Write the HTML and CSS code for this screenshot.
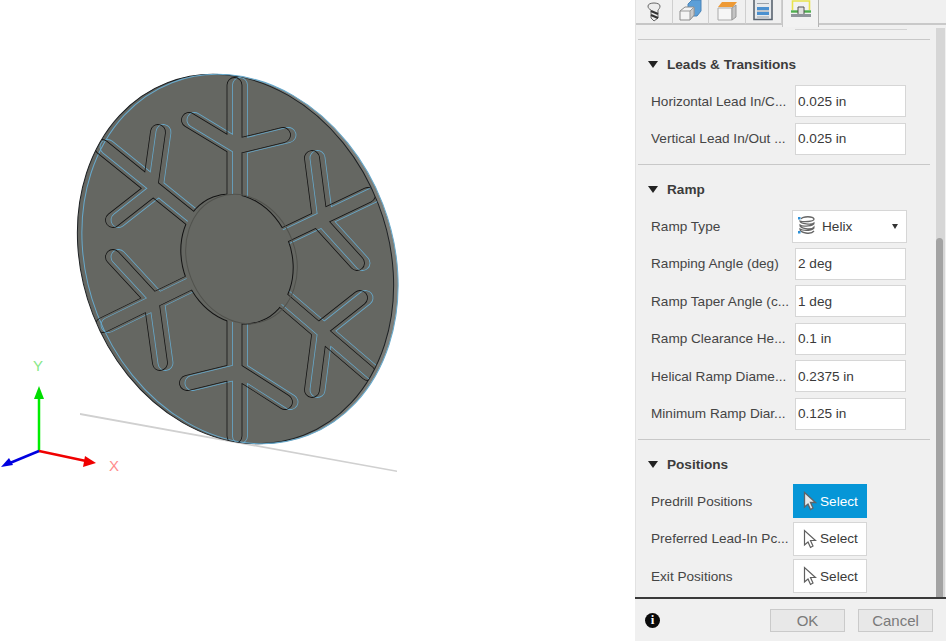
FILE: index.html
```html
<!DOCTYPE html>
<html lang="en">
<head>
<meta charset="utf-8">
<title>Toolpath settings</title>
<link rel="stylesheet" href="styles.css">
</head>
<body>
<main class="viewport">
  <svg class="scene" width="636" height="641" viewBox="0 0 636 641" xmlns="http://www.w3.org/2000/svg">
    <defs>
      <g id="flake" fill="none" stroke-linecap="round">
        <path d="M234.500 200V85M189 120L232 146M283 135L238 146"/>
        <path d="M102 147L195 222M158 132L151 182M113 220L150 191"/>
        <path d="M368 195L278 238M312 158L319 212M357 263L318 220"/>
        <path d="M234.500 320V436M187 383L232 372M285 402L238 372"/>
        <path d="M103 325L195 280M113 257L150 297M160 363L152 305"/>
        <path d="M368 373L278 296M360 298L322 328M312 390L319 336"/>
      </g>
      <mask id="flake-edge" maskUnits="userSpaceOnUse" x="0" y="0" width="636" height="641">
        <use href="#flake" stroke="#fff" stroke-width="15.800"/>
        <use href="#flake" stroke="#000" stroke-width="14.200"/>
      </mask>
      <mask id="union-edge" maskUnits="userSpaceOnUse" x="0" y="0" width="636" height="641">
        <use href="#flake" stroke="#fff" stroke-width="15.800"/>
        <ellipse fill="#fff" rx="67" ry="55" transform="translate(237 259) rotate(68.900)"/>
        <use href="#flake" stroke="#000" stroke-width="14.200"/>
        <ellipse fill="#000" rx="66" ry="54" transform="translate(237 259) rotate(68.900)"/>
      </mask>
      <clipPath id="face"><ellipse rx="189" ry="153" transform="translate(235.500 259) rotate(68.900)"/></clipPath>
    </defs>
    <path class="ground" d="M80 413L397 470.500V472L80 415Z"/>
    <ellipse class="rim" rx="189" ry="153" transform="translate(240 259) rotate(68.900)"/>
    <ellipse class="body" rx="189" ry="153" transform="translate(235.500 259) rotate(68.900)"/>
    <ellipse class="inner-blue" rx="189" ry="153" transform="translate(240 259) rotate(68.900)"/>
    <g clip-path="url(#face)">
      <g transform="translate(5.500 0)"><rect class="edge-blue" width="636" height="641" mask="url(#flake-edge)"/></g>
      <ellipse class="hub" rx="66" ry="54" transform="translate(237 259) rotate(68.900)"/>
      <rect class="edge-dark" width="636" height="641" mask="url(#union-edge)"/>
    </g>
    <ellipse class="hub-ring" rx="66" ry="54" transform="translate(241.500 259) rotate(68.900)"/>
    <path class="axis-y" d="M39 451V394"/><path class="head-y" d="M39 386L44 399H34Z"/>
    <path class="axis-x" d="M39 451L86 461"/><path class="head-x" d="M96 463L83 467L85 456Z"/>
    <path class="axis-z" d="M39 451L10 463"/><path class="head-z" d="M1 467L9 458L13 465Z"/>
    <text class="label-y" x="38" y="371">Y</text>
    <text class="label-x" x="114" y="471">X</text>
  </svg>
</main>

<aside class="panel">
  <nav class="tabs">
    <div class="tab">
      <svg width="16" height="22" viewBox="0 0 16 22"><path d="M2 6C2 2 14 2 14 6C14 8 13 9 12 10V18L8 21L5 18V10C3 9 2 8 2 6Z" fill="#ececec" stroke="#666"/><path d="M5 11L12 14M5 15L12 18" stroke="#333" stroke-width="2.200"/></svg>
    </div>
    <div class="tab">
      <svg width="24" height="22" viewBox="0 0 24 22"><path d="M10 4L14 0H23V11L19 16H10Z" fill="#5c9fd8" stroke="#4a84b8"/><path d="M2 11L7 7H16V15L12 20H2Z" fill="#f4f4f4" stroke="#8c8c8c"/><path d="M12 11V20L16 15V7Z" fill="#c9c9c9" stroke="#999"/><path d="M2 11H12" stroke="#999"/></svg>
    </div>
    <div class="tab">
      <svg width="22" height="22" viewBox="0 0 22 22"><path d="M2 7L6 2H21L17 7Z" fill="#ee9a35"/><path d="M2 8H16V20H2Z" fill="#f6f6f6" stroke="#aaa"/><path d="M16 8L20 5V17L16 20Z" fill="#c4c4c4" stroke="#999"/></svg>
    </div>
    <div class="tab">
      <svg width="20" height="22" viewBox="0 0 20 22"><path d="M1 -1V19.500H19V-1" fill="#e6e9ec" stroke="#5a6470" stroke-width="1.600"/><path d="M4 7H16V10H4ZM4 12H16V15H4Z" fill="#4a90d0"/><path d="M4 3.500H16M4 11H16M4 17H16" stroke="#9aa2aa"/></svg>
    </div>
    <div class="tab tab-active">
      <svg width="22" height="22" viewBox="0 0 22 22"><path d="M2.500 10V1H19.500V10" fill="#f2f2f2" stroke="#e9e34c" stroke-width="1.600"/><path d="M1 11.500H21" stroke="#4fae4f" stroke-width="2.400"/><path d="M1 15.500H21" stroke="#8f959b" stroke-width="3"/><path d="M8 14V7H14V14" fill="#e0e0e0" stroke="#555"/></svg>
    </div>
    <div class="tabs-rest"></div>
  </nav>

  <div class="scroll">
    <div class="content">
      <div class="cut-off"></div>

      <section class="group">
        <h2 class="group-title"><span class="caret"></span>Leads &amp; Transitions</h2>
        <div class="row"><span class="label">Horizontal Lead In/C...</span><span class="input">0.025 in</span></div>
        <div class="row"><span class="label">Vertical Lead In/Out ...</span><span class="input">0.025 in</span></div>
      </section>

      <section class="group">
        <h2 class="group-title"><span class="caret"></span>Ramp</h2>
        <div class="row">
          <span class="label">Ramp Type</span>
          <span class="dropdown">
            <svg class="helix" width="20" height="22" viewBox="0 0 20 22"><path d="M4 4C6 1 16 1 17 4C17 7 6 7 3 6C3 9 15 10 17 8C18 11 5 12 3 10C2 14 15 15 17 12C18 16 6 16 3 14C3 18 14 20 17 16" fill="none" stroke="#666" stroke-width="1.300"/><rect x="1" y="2" width="2.500" height="2.500" fill="#2b8fd6"/><rect x="1" y="16" width="2.500" height="2.500" fill="#2b8fd6"/></svg>
            <span class="dropdown-text">Helix</span>
            <span class="dropdown-caret"></span>
          </span>
        </div>
        <div class="row"><span class="label">Ramping Angle (deg)</span><span class="input">2 deg</span></div>
        <div class="row"><span class="label">Ramp Taper Angle (c...</span><span class="input">1 deg</span></div>
        <div class="row"><span class="label">Ramp Clearance He...</span><span class="input">0.1 in</span></div>
        <div class="row"><span class="label">Helical Ramp Diame...</span><span class="input">0.2375 in</span></div>
        <div class="row"><span class="label">Minimum Ramp Diar...</span><span class="input">0.125 in</span></div>
      </section>

      <section class="group">
        <h2 class="group-title"><span class="caret"></span>Positions</h2>
        <div class="row">
          <span class="label">Predrill Positions</span>
          <span class="select select-active"><svg width="14" height="20" viewBox="0 0 14 20"><path d="M1.500 1.500V16L5 13L7.500 18.500L10 17L7.500 11.500H12.500Z" fill="#e6e9eb" stroke="#5f6468" stroke-width="1.300"/></svg>Select</span>
        </div>
        <div class="row">
          <span class="label">Preferred Lead-In Pc...</span>
          <span class="select"><svg width="14" height="20" viewBox="0 0 14 20"><path d="M1.500 1.500V16L5 13L7.500 18.500L10 17L7.500 11.500H12.500Z" fill="#fff" stroke="#5f5f5f" stroke-width="1.200"/></svg>Select</span>
        </div>
        <div class="row">
          <span class="label">Exit Positions</span>
          <span class="select"><svg width="14" height="20" viewBox="0 0 14 20"><path d="M1.500 1.500V16L5 13L7.500 18.500L10 17L7.500 11.500H12.500Z" fill="#fff" stroke="#5f5f5f" stroke-width="1.200"/></svg>Select</span>
        </div>
      </section>
    </div>
    <div class="scrollbar"><div class="thumb"></div></div>
  </div>

  <footer class="footer">
    <span class="info">i</span>
    <span class="btn">OK</span>
    <span class="btn">Cancel</span>
  </footer>
</aside>
</body>
</html>
```

FILE: styles.css
```css
* { box-sizing: border-box; }

html, body { margin: 0; height: 100%; }

body {
  display: flex;
  width: 946px;
  height: 641px;
  overflow: hidden;
  background: #fff;
  font-family: "Liberation Sans", Arial, sans-serif;
  font-size: 13.6px;
  color: #454545;
}

.viewport { width: 635px; flex: none; position: relative; background: #fff; }
.scene { position: absolute; left: 0; top: 0; }

.ground { fill: #d0d0d0; }
.rim { fill: #7c7d78; }
.body { fill: #656762; stroke: #1d2124; stroke-width: 1; }
.inner-blue { fill: none; stroke: #67a9cc; stroke-width: 1; }
.edge-blue { fill: #66a8ca; }
.edge-dark { fill: #131313; }
.hub { fill: #656762; }
.hub-ring { fill: none; stroke: #51524d; stroke-width: 1; }

.axis-y { stroke: #00ee00; stroke-width: 2.5; }
.head-y { fill: #00dd00; }
.axis-x { stroke: #f00000; stroke-width: 2.5; }
.head-x { fill: #f00000; }
.axis-z { stroke: #0000e0; stroke-width: 2.5; }
.head-z { fill: #0000e0; }
.label-y, .label-x { font-size: 15px; }
.label-y { fill: #86e886; text-anchor: middle; }
.label-x { fill: #ff8c8c; text-anchor: middle; }

.panel {
  width: 311px;
  flex: none;
  display: flex;
  flex-direction: column;
  background: #f0f0f0;
  border-left: 1px solid #e2e2e2;
}

.tabs { display: flex; height: 25px; flex: none; }
.tab {
  width: 36.500px;
  height: 25px;
  display: flex;
  justify-content: center;
  align-items: flex-start;
  border-right: 1px solid #cfcfcf;
  border-bottom: 2px solid #c6c6c6;
  overflow: hidden;
}
.tab-active {
  width: 37px;
  height: 27px;
  border-left: 1px solid #c6c6c6;
  border-right: 1px solid #b5b5b5;
  border-bottom: 0;
  background: #f2f2f2;
  position: relative;
}
.tabs-rest { flex: 1; border-bottom: 2px solid #c9c9c9; }

.scroll { flex: 1; display: flex; min-height: 0; }
.content { width: 300px; flex: none; padding-left: 2px; }

.cut-off {
  width: 112px;
  height: 5px;
  margin-left: 157px;
  background: #f0f0f0;
  border-bottom: 1px solid #d4d4d4;
  margin-bottom: 9px;
}

.group {
  width: 292px;
  border-top: 1px solid #c8c8c8;
  padding-top: 14px;
  padding-bottom: 6.75px;
}

.group-title {
  display: flex;
  align-items: center;
  height: 20px;
  margin: 0 0 8.25px 0;
  padding-left: 10px;
  font-size: 13.6px;
  font-weight: 700;
  color: #3c3c3c;
}

.caret {
  width: 0;
  height: 0;
  margin-right: 9px;
  border-left: 5px solid transparent;
  border-right: 5px solid transparent;
  border-top: 7px solid #222;
}

.row {
  height: 37.5px;
  display: flex;
  align-items: center;
  padding-left: 13px;
}

.label { width: 144px; flex: none; white-space: nowrap; overflow: hidden; }

.input {
  width: 111px;
  height: 32px;
  display: flex;
  align-items: center;
  padding-left: 2px;
  background: #fff;
  border: 1px solid #d6d6d6;
  color: #3a3a3a;
}

.dropdown {
  width: 115px;
  height: 33px;
  margin-left: -3px;
  display: flex;
  align-items: center;
  padding: 0 8px 0 4px;
  background: #fff;
  border: 1px solid #d6d6d6;
  color: #3a3a3a;
}
.helix { flex: none; }
.dropdown-text { flex: 1; margin-left: 5px; }
.dropdown-caret {
  width: 0;
  height: 0;
  border-left: 3.5px solid transparent;
  border-right: 3.5px solid transparent;
  border-top: 5px solid #333;
}

.select {
  width: 74px;
  height: 34px;
  margin-left: -2px;
  display: flex;
  align-items: center;
  gap: 3px;
  padding-left: 9px;
  background: #fff;
  border: 1px solid #d6d6d6;
  color: #3a3a3a;
}
.select-active { background: #0696d7; border-color: #0696d7; color: #fff; }

.scrollbar { width: 9px; flex: none; background: #d6d6d6; margin-top: 3px; }
.thumb { margin-top: 210px; height: 359px; width: 7px; background: #a3a3a3; border-radius: 4px 4px 0 0; }

.footer {
  height: 44px;
  flex: none;
  display: flex;
  align-items: center;
  gap: 13px;
  padding: 0 13px 0 10px;
  margin-left: -1px;
  border-top: 2px solid #3a3a3a;
  background: #f0f0f0;
}

.info {
  width: 15px;
  height: 15px;
  margin-right: auto;
  display: flex;
  align-items: center;
  justify-content: center;
  border-radius: 50%;
  background: #0b0b0b;
  color: #fff;
  font-family: "Liberation Serif", serif;
  font-size: 13px;
  font-weight: 700;
}

.btn {
  width: 75px;
  height: 23px;
  display: flex;
  align-items: center;
  justify-content: center;
  background: #e8e8e8;
  border: 1px solid #cacaca;
  color: #7a7a7a;
  font-size: 15px;
}
```
